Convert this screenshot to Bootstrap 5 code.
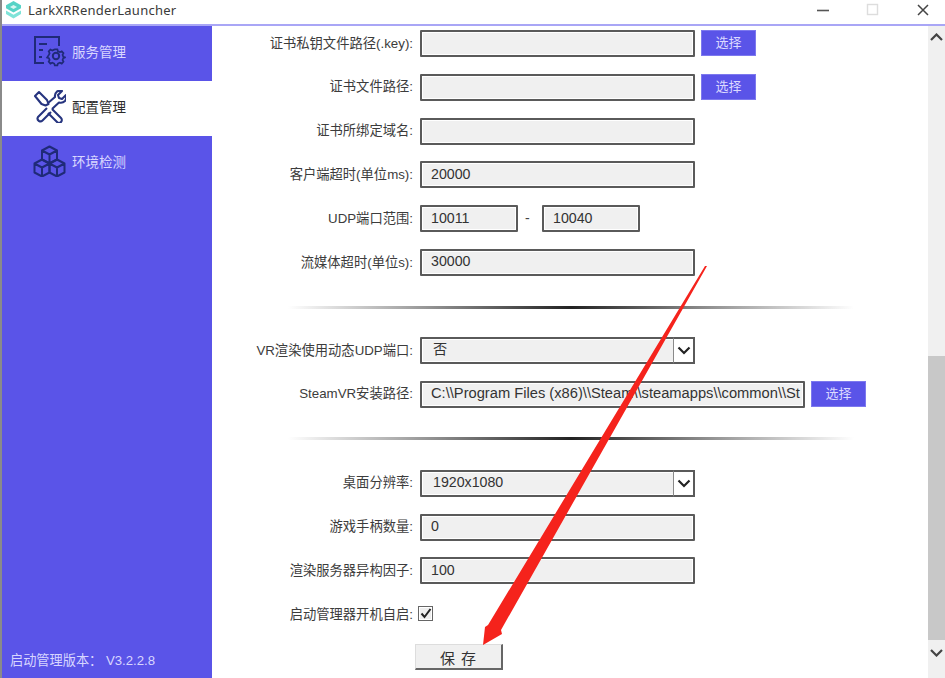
<!DOCTYPE html>
<html lang="zh">
<head>
<meta charset="utf-8">
<title>LarkXRRenderLauncher</title>
<link href="https://cdn.jsdelivr.net/npm/bootstrap@5.3.0/dist/css/bootstrap.min.css" rel="stylesheet">
<style>
html,body{height:678px;overflow:hidden;background:#fff}
body{font-family:"Liberation Sans","Noto Sans CJK SC",sans-serif;color:#333}
.win-shell{height:678px;border-left:2px solid #8a8a8a;position:relative;overflow:hidden}
.title-strip{height:26px;border-bottom:2px solid #a9a6f6;flex:none;padding:0 16px 4px 3px}
.title-name{font-family:"Noto Sans","Noto Sans CJK SC",sans-serif;font-size:13px;color:#3a3a3a;margin-left:6px;letter-spacing:.25px;line-height:20px}
.win-glyphs{margin-left:auto}
.side-col{width:210px;flex:none;background:#5a54e8}
.side-item{height:55px;padding:0 0 5px 31px;gap:6px;font-size:13.5px;color:#d8d6ff;font-family:"Noto Sans CJK SC",sans-serif}
.side-item.is-on{background:#fff;color:#2a2a2a}
.side-foot{margin-top:auto;padding:0 0 7px 8px;color:#d8d6ff;font-size:13.2px;font-family:"Liberation Sans","Noto Sans CJK SC",sans-serif}
.main-pane{padding-top:4px;min-width:0}
.frm-row{height:27px;margin-bottom:16.8px;gap:7px}
.frm-label{width:201px;flex:none;text-align:right;font-size:13.3px;color:#3c3c3c;white-space:nowrap;font-family:"Liberation Sans","Noto Sans CJK SC",sans-serif}
.frm-field.form-control,.frm-select.form-select{width:275px;height:27px;flex:none;border:2px solid #5a5a5a;border-radius:1px;background:#f0f0f0;box-shadow:inset 0 0 0 1px #fff;padding:0 0 2px 9px;font-size:14.2px;color:#333;min-height:0;font-family:"Liberation Sans","Noto Sans CJK SC",sans-serif}
.frm-field.form-control:focus{background:#f0f0f0;border-color:#5a5a5a;box-shadow:inset 0 0 0 1px #fff}
.frm-field.narrow-field.form-control{width:98px}
.frm-field.path-field.form-control{width:385px;padding-left:9px;font-size:14.7px}
.frm-select.form-select{background-image:none;padding:0 0 4px 11px}
.sel-box{width:275px;height:27px;position:relative;flex:none}
.sel-arrow{position:absolute;right:0;top:0;width:22px;height:27px;border:2px solid #5a5a5a;border-left:1px solid #8a8a8a;background:#fff;pointer-events:none}
.pick-btn.btn{width:55px;height:26px;padding:0;flex:none;margin-left:-1px;margin-top:-1px;background:#5a54e8;border:1px solid #7d79ee;border-radius:0;color:#dcdaff;font-size:13px}
.range-dash{width:10px;font-size:14px;color:#444}
.fade-rule{width:566px;height:3px;margin-left:76px;background:linear-gradient(90deg,transparent,#aaa 20%,#222 50%,#aaa 80%,transparent)}
.rule-one{margin-top:30px;margin-bottom:28px}
.rule-two{margin-top:29px;margin-bottom:30px}
.tick-box{width:15px;height:15px;margin-left:-2px;margin-top:-2px;border:1px solid #666;background:#eee;box-shadow:inset 0 0 0 1px #fff}
.save-btn.btn{width:88px;height:26px;margin-left:203px;margin-top:-1px;padding:3px 0 0;background:#f0f0f0;border:0;border-top:1px solid #ddd;border-left:1px solid #ddd;border-right:2px solid #666;border-bottom:2px solid #666;border-radius:0;color:#333;font-size:15px;letter-spacing:1px;display:block}
.scroll-rail{width:17px;flex:none;background:#f0f0f0;padding-top:2px}
.rail-cell{height:17px;flex:none}
.rail-gap{height:311px;flex:none}
.rail-thumb{height:284px;flex:none;background:#c8c8c8}
.red-pointer{position:absolute;left:-2px;top:0;pointer-events:none}
</style>
</head>
<body>
<div class="win-shell d-flex flex-column">
  <div class="title-strip d-flex align-items-center">
    <svg width="17" height="18" viewBox="2 1 15 18"><path d="M9.500 1 17 5.200v3L9.500 12.500 2 8.200v-3z" fill="#56d3c6"/><path d="M2 10.500l7.500 4.300 7.500-4.300v3.500L9.500 18.600 2 14z" fill="#7fe3d8"/><path d="M9.500 5 13 7 9.500 9 6 7z" fill="#d9f6f2"/></svg>
    <span class="title-name">LarkXRRenderLauncher</span>
    <svg class="win-glyphs" width="112" height="16" viewBox="0 0 112 16"><path d="M0 8.500h12" stroke="#555" stroke-width="1.600"/><rect x="50.500" y="2.500" width="10" height="10" fill="none" stroke="#ddd" stroke-width="1.400"/><path d="M101 3 111 13M111 3 101 13" stroke="#444" stroke-width="1.500"/></svg>
  </div>
  <div class="d-flex flex-grow-1" style="min-height:0">
    <nav class="side-col d-flex flex-column">
      <div class="side-item d-flex align-items-center">
        <svg width="33" height="32" viewBox="0 0 33 32" fill="none" stroke="#1f2a78" stroke-width="2"><path d="M26 11V2H2v26h9"/><path d="M6 9h8M6 15h4M6 22h3"/><path d="M21.500 13.500h3l.7 2.300 2.200 1 2.200-1.100 2 2.200-1.100 2 .9 2.200 2 .7v.2l-2 .7-.9 2.200 1.100 2-2 2.200-2.200-1.100-2.200 1-.7 2.200h-3l-.7-2.200-2.200-1-2.200 1.100-2-2.200 1.100-2-.9-2.200-2-.7 2-3 .9-2 -1.100-2 2-2.200 2.200 1.100 2.200-1z" transform="translate(3.300 2.700) scale(.86)"/><circle cx="23" cy="21" r="3.200"/></svg>
        <span>服务管理</span>
      </div>
      <div class="side-item is-on d-flex align-items-center">
        <svg width="33" height="33" viewBox="0 0 33 33" fill="none" stroke="#26347f" stroke-width="2.100" stroke-linejoin="round"><path d="M2 6 6 2l8 8 1.500 4-3 1.500-4-1.500z"/><path d="M14 18 5 27a3 3 0 0 0 1 4 3 3 0 0 0 3.500-.5L18 22"/><path d="M15 13 22 7a6 6 0 0 1 2-5.500 6 6 0 0 1 5-.5l-4 4 1 3 3 1 4-4a7 7 0 0 1-1 6 6 6 0 0 1-6 1.500L19 19"/><path d="M19 19l9 9a2.800 2.800 0 0 1-4 4l-9-9"/></svg>
        <span>配置管理</span>
      </div>
      <div class="side-item d-flex align-items-center">
        <svg width="33" height="32" viewBox="0 0 33 32" fill="none" stroke="#1f2a78" stroke-width="2" stroke-linejoin="round"><path d="M16.500 1.500 24 5.500v9l-7.500 4-7.500-4v-9zM9 5.500l7.500 4 7.500-4M16.500 9.500v9"/><path d="M9 14.500 16.500 18.500v9L9 31.500 1.500 27.500v-9zM1.500 18.500l7.500 4 7.500-4M9 22.500v9"/><path d="M24 14.500l7.500 4v9L24 31.500l-7.500-4v-9zM16.500 18.500l7.500 4 7.500-4M24 22.500v9"/></svg>
        <span>环境检测</span>
      </div>
      <div class="side-foot">启动管理版本：&nbsp;V3.2.2.8</div>
    </nav>
    <main class="main-pane flex-grow-1">
      <div class="frm-row d-flex align-items-center"><label class="frm-label">证书私钥文件路径(.key):</label><input class="frm-field form-control" value=""><button class="pick-btn btn">选择</button></div>
      <div class="frm-row d-flex align-items-center"><label class="frm-label">证书文件路径:</label><input class="frm-field form-control" value=""><button class="pick-btn btn">选择</button></div>
      <div class="frm-row d-flex align-items-center"><label class="frm-label">证书所绑定域名:</label><input class="frm-field form-control" value=""></div>
      <div class="frm-row d-flex align-items-center"><label class="frm-label">客户端超时(单位ms):</label><input class="frm-field form-control" value="20000"></div>
      <div class="frm-row d-flex align-items-center"><label class="frm-label">UDP端口范围:</label><input class="frm-field narrow-field form-control" value="10011"><span class="range-dash">-</span><input class="frm-field narrow-field form-control" value="10040"></div>
      <div class="frm-row d-flex align-items-center mb-0"><label class="frm-label">流媒体超时(单位s):</label><input class="frm-field form-control" value="30000"></div>
      <div class="fade-rule rule-one"></div>
      <div class="frm-row d-flex align-items-center"><label class="frm-label">VR渲染使用动态UDP端口:</label>
        <div class="sel-box"><select class="frm-select form-select"><option>否</option></select><span class="sel-arrow d-flex align-items-center justify-content-center"><svg width="14" height="9" viewBox="0 0 14 9"><path d="M1.500 1.500 7 7l5.500-5.500" fill="none" stroke="#222" stroke-width="2.200"/></svg></span></div></div>
      <div class="frm-row d-flex align-items-center mb-0"><label class="frm-label">SteamVR安装路径:</label><input class="frm-field path-field form-control" value="C:\\Program Files (x86)\\Steam\\steamapps\\common\\St"><button class="pick-btn btn">选择</button></div>
      <div class="fade-rule rule-two"></div>
      <div class="frm-row d-flex align-items-center"><label class="frm-label">桌面分辨率:</label>
        <div class="sel-box"><select class="frm-select form-select"><option>1920x1080</option></select><span class="sel-arrow d-flex align-items-center justify-content-center"><svg width="14" height="9" viewBox="0 0 14 9"><path d="M1.500 1.500 7 7l5.500-5.500" fill="none" stroke="#222" stroke-width="2.200"/></svg></span></div></div>
      <div class="frm-row d-flex align-items-center"><label class="frm-label">游戏手柄数量:</label><input class="frm-field form-control" value="0"></div>
      <div class="frm-row d-flex align-items-center"><label class="frm-label">渲染服务器异构因子:</label><input class="frm-field form-control" value="100"></div>
      <div class="frm-row d-flex align-items-center"><label class="frm-label">启动管理器开机自启:</label><span class="tick-box d-flex align-items-center justify-content-center"><svg width="12" height="11" viewBox="0 0 12 11"><path d="M1.500 5.500 4.500 9l6-8" fill="none" stroke="#222" stroke-width="2"/></svg></span></div>
      <button class="save-btn btn">保&nbsp;存</button>
    </main>
    <div class="scroll-rail d-flex flex-column">
      <div class="rail-cell d-flex align-items-center justify-content-center"><svg width="13" height="8" viewBox="0 0 13 8"><path d="M1 7 6.500 1.500 12 7" fill="none" stroke="#444" stroke-width="2.200"/></svg></div>
      <div class="rail-gap"></div>
      <div class="rail-thumb"></div>
      <div class="rail-cell d-flex align-items-center justify-content-center mt-1"><svg width="13" height="8" viewBox="0 0 13 8"><path d="M1 1 6.500 6.500 12 1" fill="none" stroke="#444" stroke-width="2.200"/></svg></div>
    </div>
  </div>
  <svg class="red-pointer" width="945" height="678" viewBox="0 0 945 678"><path d="M707 266 501 630 502 634 483 645 485 627 488 625 705 266z" fill="#f5231c"/></svg>
</div>
<script src="https://cdn.jsdelivr.net/npm/bootstrap@5.3.0/dist/js/bootstrap.bundle.min.js"></script>
</body>
</html>
